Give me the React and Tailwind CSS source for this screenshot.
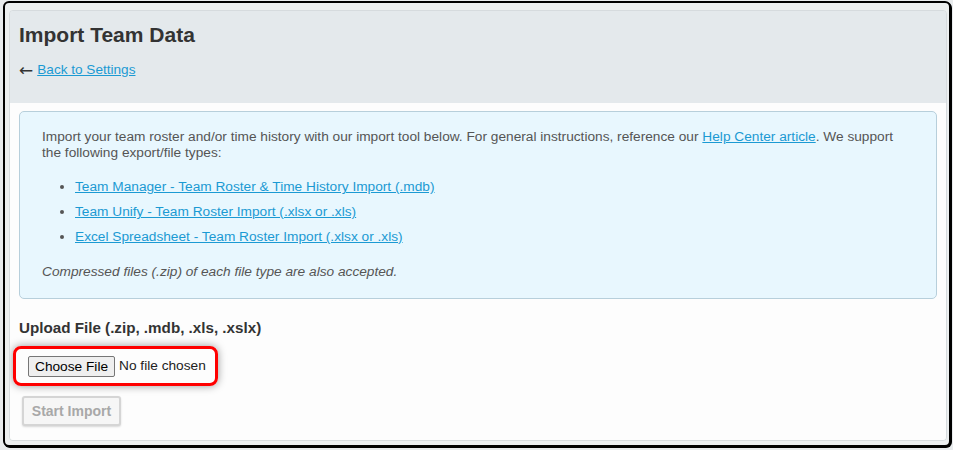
import React from "react";

export default function App() {
  const font = { fontFamily: '"Liberation Sans", Arial, sans-serif' };
  return (
    <div className="w-[953px] h-[450px] bg-[#e8ebed] pt-[1px] pl-[3px] overflow-hidden" style={font}>
      <div className="w-[948px] h-[446px] border-2 border-black rounded-[6px] bg-[#eceff0] pt-[7px] pl-[4px] pr-[2px] pb-[4px] flex flex-col shadow-[1px_1px_0_#000]">
        <div className="flex-1 flex flex-col border border-[#d6dbde] rounded-[4px] overflow-hidden">
          <div className="h-[92px] bg-[#e4e9ec] px-[9px] pt-[11px] shrink-0">
            <h1 className="text-[21px] leading-[26px] font-bold text-[#333]">Import Team Data</h1>
            <div className="mt-[13px] text-[13.6px] leading-[18px] text-[#333] flex items-center">
              <span className="mr-[4px] text-[17px] leading-[18px]" style={{ fontFamily: '"DejaVu Sans", sans-serif' }}>←</span>
              <a href="#" className="text-[#1b9ad3] underline">Back to Settings</a>
            </div>
          </div>
          <div className="flex-1 bg-[#fdfdfd] px-[9px] pt-[8px]">
            <div className="border border-[#b7cfdb] rounded-[5px] bg-[#e8f7fe] pl-[22px] pr-[30px] pt-[17px] pb-[18px] text-[13.7px] text-[#555]">
              <p className="leading-[16px]">
                Import your team roster and/or time history with our import tool below. For general instructions, reference our{" "}
                <a href="#" className="text-[#1b9ad3] underline">Help Center article</a>. We support the following export/file types:
              </p>
              <ul className="list-disc pl-[33px] mt-[17px] marker:text-[#555]">
                <li className="leading-[18px] mb-[7px]"><a href="#" className="text-[#1b9ad3] underline">Team Manager - Team Roster &amp; Time History Import (.mdb)</a></li>
                <li className="leading-[18px] mb-[7px]"><a href="#" className="text-[#1b9ad3] underline">Team Unify - Team Roster Import (.xlsx or .xls)</a></li>
                <li className="leading-[18px]"><a href="#" className="text-[#1b9ad3] underline">Excel Spreadsheet - Team Roster Import (.xlsx or .xls)</a></li>
              </ul>
              <p className="italic leading-[16px] mt-[18px]">Compressed files (.zip) of each file type are also accepted.</p>
            </div>
            <div className="mt-[20px] text-[15.2px] leading-[18px] font-bold text-[#333]">Upload File (.zip, .mdb, .xls, .xslx)</div>
            <div className="mt-[9px] ml-[-6px] w-[205px] h-[40px] border-[3px] border-[#ff0000] rounded-[8px] shadow-[0_0_8px_rgba(0,0,0,0.4)] flex items-center pl-[12px]">
              <span className="h-[21px] border border-[#767676] rounded-[2px] bg-[#efefef] px-[6px] text-[13.7px] leading-[19px] text-black">Choose File</span>
              <span className="ml-[4px] text-[13.7px] text-[#222]">No file chosen</span>
            </div>
            <div className="mt-[10px] ml-[3px] w-[99px] h-[30px] border-2 border-[#d5d5d5] rounded-[3px] bg-[#f6f6f6] shadow-[0_1px_2px_rgba(0,0,0,0.15)] flex items-center justify-center text-[14px] font-bold text-[#a8a8a8]">Start Import</div>
          </div>
        </div>
      </div>
    </div>
  );
}
